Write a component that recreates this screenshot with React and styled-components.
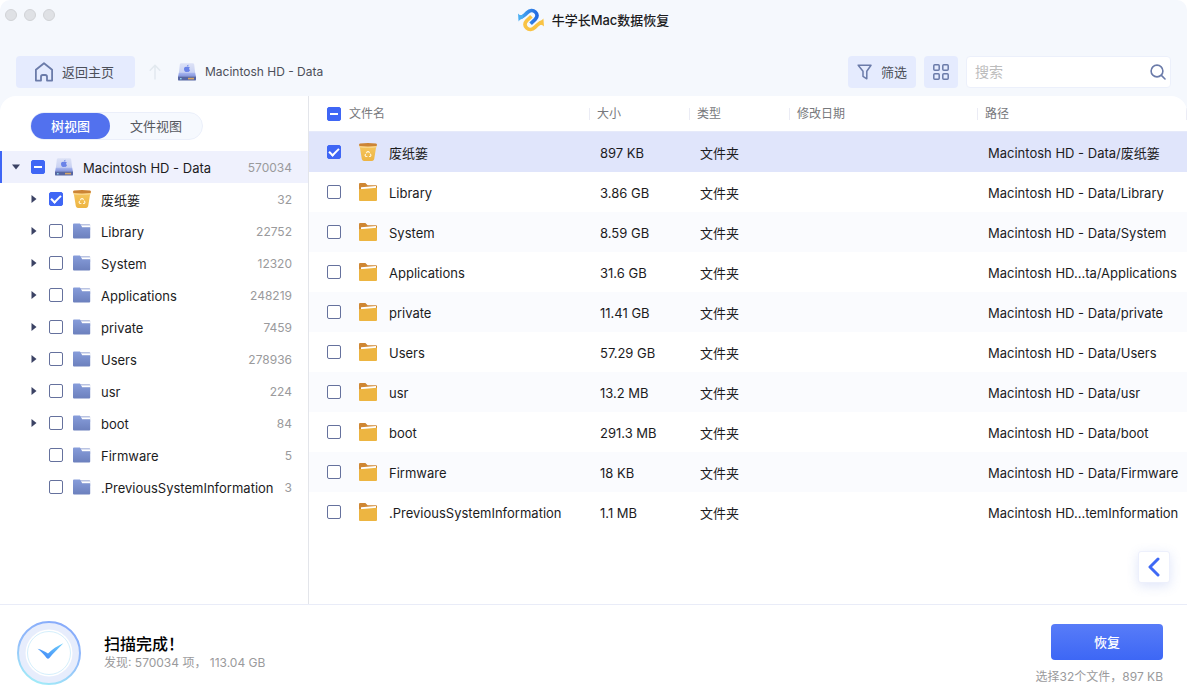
import React, { useState } from "react";
import styled, { createGlobalStyle } from "styled-components";

const TREE = [
  { name: "废纸篓", count: 32, icon: "bin", open: true, checked: true },
  { name: "Library", count: 22752, open: true },
  { name: "System", count: 12320, open: true },
  { name: "Applications", count: 248219, open: true },
  { name: "private", count: 7459, open: true },
  { name: "Users", count: 278936, open: true },
  { name: "usr", count: 224, open: true },
  { name: "boot", count: 84, open: true },
  { name: "Firmware", count: 5 },
  { name: ".PreviousSystemInformation", count: 3 },
];

const FILES = [
  { name: "废纸篓", size: "897 KB", path: "Macintosh HD - Data/废纸篓", icon: "bin" },
  { name: "Library", size: "3.86 GB", path: "Macintosh HD - Data/Library" },
  { name: "System", size: "8.59 GB", path: "Macintosh HD - Data/System" },
  { name: "Applications", size: "31.6 GB", path: "Macintosh HD...ta/Applications" },
  { name: "private", size: "11.41 GB", path: "Macintosh HD - Data/private" },
  { name: "Users", size: "57.29 GB", path: "Macintosh HD - Data/Users" },
  { name: "usr", size: "13.2 MB", path: "Macintosh HD - Data/usr" },
  { name: "boot", size: "291.3 MB", path: "Macintosh HD - Data/boot" },
  { name: "Firmware", size: "18 KB", path: "Macintosh HD - Data/Firmware" },
  { name: ".PreviousSystemInformation", size: "1.1 MB", path: "Macintosh HD...temInformation" },
];

const Logo = () => (
  <svg width="26" height="24" viewBox="0 0 26 24" fill="none">
    <defs>
      <linearGradient id="logoBlue" x1="0" y1="0" x2="20" y2="0" gradientUnits="userSpaceOnUse">
        <stop offset="0" stopColor="#4db2f3" />
        <stop offset="1" stopColor="#2167e0" />
      </linearGradient>
    </defs>
    <path
      d="M1 9.3 C4 9.6 5.4 8.4 7 6.8 L9.2 4.6 C11.8 2 15 1.8 17.3 4 C19.6 6.2 19.6 8.8 17.3 11.2 L12.6 15.8"
      stroke="url(#logoBlue)"
      strokeWidth="3.7"
    />
    <path d="M0 5.4 C1.6 7.4 3.4 7.6 5 6.8 L5 10.6 C3 11.2 1.8 12 0.6 13.4 Z" fill="#4aaef2" />
    <g transform="rotate(180 13 12)">
      <path
        d="M1 9.3 C4 9.6 5.4 8.4 7 6.8 L9.2 4.6 C11.8 2 15 1.8 17.3 4 C19.6 6.2 19.6 8.8 17.3 11.2 L12.6 15.8"
        stroke="#f9c344"
        strokeWidth="3.7"
      />
      <path d="M0 5.4 C1.6 7.4 3.4 7.6 5 6.8 L5 10.6 C3 11.2 1.8 12 0.6 13.4 Z" fill="#f9c344" />
    </g>
  </svg>
);

const HomeIcon = () => (
  <svg width="20" height="20" viewBox="0 0 20 20" fill="none" stroke="#6b7ba9" strokeWidth="1.8" strokeLinejoin="round">
    <path d="M1.9 7.8 L10 1.3 L18.1 7.8 V18.6 H13 V14.8 a1.8 1.8 0 0 0 -1.8 -1.8 H8.8 a1.8 1.8 0 0 0 -1.8 1.8 V18.6 H1.9 Z" />
  </svg>
);

const UpIcon = () => (
  <svg width="12" height="16" viewBox="0 0 12 16" fill="none" stroke="#e2e9ef" strokeWidth="1.5" strokeLinecap="round" strokeLinejoin="round">
    <path d="M6 15 V1.5 M1.2 6.2 L6 1.3 L10.8 6.2" />
  </svg>
);

const DiskIcon = () => (
  <svg width="18" height="18" viewBox="0 0 18 18">
    <defs>
      <linearGradient id="diskTop" x1="0" y1="0" x2="0" y2="1">
        <stop offset="0" stopColor="#dde2f6" />
        <stop offset="1" stopColor="#c6cff2" />
      </linearGradient>
      <linearGradient id="diskMid" x1="0" y1="0" x2="0" y2="1">
        <stop offset="0" stopColor="#a9b7ee" />
        <stop offset="1" stopColor="#7f90dc" />
      </linearGradient>
    </defs>
    <path d="M3.4 0.2 h11.2 a1.6 1.6 0 0 1 1.6 1.4 L17.2 10.6 H0.8 L1.8 1.6 A1.6 1.6 0 0 1 3.4 0.2 Z" fill="url(#diskTop)" />
    <path d="M0.8 9.8 H17.2 L18 13.8 H0 Z" fill="url(#diskMid)" />
    <path d="M0 13.4 h18 v3 a1.2 1.2 0 0 1 -1.2 1.2 H1.2 a1.2 1.2 0 0 1 -1.2 -1.2 Z" fill="#5766a3" />
    <rect x="2" y="15" width="1.6" height="1.4" fill="#8fd3e8" />
    <rect x="10" y="14.8" width="6" height="1.6" fill="#d7a666" />
    <path
      d="M9 3.9 C7.7 3.4 6 3.9 6 5.9 C6 7.7 7.2 9 8 9 C8.5 9 8.6 8.7 9.1 8.7 C9.6 8.7 9.8 9 10.2 9 C11 9 11.8 7.9 12 7.1 C10.8 6.5 10.9 4.9 11.9 4.4 C11.1 3.4 9.9 3.6 9 3.9 Z M9 3.4 C9 2.5 9.7 1.8 10.5 1.7 C10.6 2.6 9.9 3.4 9 3.4 Z"
      fill="#6a83e8"
    />
  </svg>
);

const BinIcon = () => (
  <svg width="18" height="18" viewBox="0 0 18 18">
    <defs>
      <linearGradient id="binBody" x1="0" y1="0" x2="0" y2="1">
        <stop offset="0" stopColor="#f6c75e" />
        <stop offset="1" stopColor="#edb443" />
      </linearGradient>
    </defs>
    <path d="M0.6 2.4 H17.4 L15.2 16 a2.2 2.2 0 0 1 -2 1.9 H4.8 a2.2 2.2 0 0 1 -2 -1.9 Z" fill="url(#binBody)" />
    <path d="M0.3 2.6 Q9 4 17.7 2.6 L17.3 4.6 Q9 5.6 0.7 4.6 Z" fill="#fad586" />
    <path d="M1 0.6 Q9 -0.6 17 0.6 Q18 1 18 2 Q18 2.8 17 3 Q9 3.8 1 3 Q0 2.8 0 2 Q0 1 1 0.6 Z" fill="#cc8435" />
    <g fill="none" stroke="#fff3d6" strokeWidth="1.1" strokeLinejoin="round">
      <path d="M7.2 10.2 L8.4 8.6 H9.7 L10.6 10" />
      <path d="M11.2 10.8 L12 12.2 L11.3 13.5 H10" />
      <path d="M8.4 13.5 H6.8 L6 12.2 L6.7 11" />
    </g>
  </svg>
);

const BlueFolderIcon = () => (
  <svg width="18" height="16" viewBox="0 0 18 16">
    <defs>
      <linearGradient id="folderBlue" x1="0" y1="0" x2="0" y2="1">
        <stop offset="0" stopColor="#879ddb" />
        <stop offset="1" stopColor="#6c80bd" />
      </linearGradient>
    </defs>
    <path d="M7 1 H16.2 a1 1 0 0 1 1 1 V7 H7 Z" fill="#b9c3e2" />
    <path d="M8 2.6 H17.2 V4 H9 Z" fill="#ffffff" />
    <path d="M1 0.4 H7 L9.2 4.6 H17.2 V14.6 a1 1 0 0 1 -1 1 H1 a1 1 0 0 1 -1 -1 V1.4 a1 1 0 0 1 1 -1 Z" fill="url(#folderBlue)" />
  </svg>
);

const YellowFolderIcon = () => (
  <svg width="18" height="18" viewBox="0 0 18 18">
    <path d="M1 0 H6.4 L8.6 2.2 H17 a1 1 0 0 1 1 1 V8 H0 V1 a1 1 0 0 1 1 -1 Z" fill="#cf8733" />
    <path d="M2 4.2 L17 3 V7 H2 Z" fill="#ffffff" />
    <path d="M0 6.2 L6.6 5.8 L18 4.8 V17 a1 1 0 0 1 -1 1 H1 a1 1 0 0 1 -1 -1 Z" fill="#edb541" />
  </svg>
);

const FilterIcon = () => (
  <svg width="16" height="16" viewBox="0 0 16 16" fill="none" stroke="#6b7ba9" strokeWidth="1.5" strokeLinejoin="round">
    <path d="M1.2 1.2 H14 L9.8 7.2 V14.8 L6 12.4 V7.2 Z" />
  </svg>
);

const GridIcon = () => (
  <svg width="16" height="16" viewBox="0 0 16 16" fill="none" stroke="#6b7ba9" strokeWidth="1.5">
    <rect x="0.8" y="0.8" width="5.4" height="5.4" rx="1" />
    <rect x="9.8" y="0.8" width="5.4" height="5.4" rx="1" />
    <rect x="0.8" y="9.8" width="5.4" height="5.4" rx="1" />
    <rect x="9.8" y="9.8" width="5.4" height="5.4" rx="1" />
  </svg>
);

const SearchIcon = () => (
  <svg width="16" height="16" viewBox="0 0 16 16" fill="none" stroke="#6b7ba9" strokeWidth="1.6" strokeLinecap="round">
    <circle cx="7" cy="7" r="5.9" />
    <path d="M11.4 11.4 L15 15" />
  </svg>
);

const DoneIcon = () => (
  <svg width="66" height="66" viewBox="0 0 66 66">
    <defs>
      <linearGradient id="ring" x1="0.7" y1="0" x2="0.3" y2="1">
        <stop offset="0" stopColor="#86aafb" />
        <stop offset="0.5" stopColor="#93bdfa" />
        <stop offset="1" stopColor="#a2ecf8" />
      </linearGradient>
      <linearGradient id="tick" x1="0" y1="1" x2="1" y2="0">
        <stop offset="0" stopColor="#3f83f8" />
        <stop offset="1" stopColor="#6fd0fb" />
      </linearGradient>
    </defs>
    <circle cx="33" cy="33" r="31" fill="#e7edfc" stroke="url(#ring)" strokeWidth="2" />
    <circle cx="33" cy="33" r="23.5" fill="#ffffff" />
    <circle cx="33" cy="33" r="21.5" fill="none" stroke="#d5effc" strokeWidth="1" />
    <path d="M21.6 28.8 C25.4 29.8 28.8 31.4 32 33.6 C36.4 29.2 41 26 47.4 23.2 C42.4 28.4 37.4 33 33.4 38 Q32 39.6 30.6 38 C28 34.6 25.4 31.8 21.6 28.8 Z" fill="url(#tick)" />
  </svg>
);

const ChevronIcon = () => (
  <svg width="12" height="20" viewBox="0 0 12 20" fill="none" stroke="#3f69f5" strokeWidth="3" strokeLinecap="round" strokeLinejoin="round">
    <path d="M10 2 L2 10 L10 18" />
  </svg>
);

const Caret = ({ down }) =>
  down ? (
    <svg width="8" height="6" viewBox="0 0 8 6">
      <path d="M0 0.5 H8 L4 5.5 Z" fill="#3b4264" />
    </svg>
  ) : (
    <svg width="6" height="8" viewBox="0 0 6 8">
      <path d="M0.5 0 V8 L5.5 4 Z" fill="#3b4264" />
    </svg>
  );

const Check = ({ mixed, ...rest }) => (
  <Checkbox
    type="checkbox"
    ref={(el) => {
      if (el) el.indeterminate = !!mixed;
    }}
    {...rest}
  />
);

const App = () => {
  const [picked, setPicked] = useState(["废纸篓"]);
  const toggle = (name) =>
    setPicked((prev) =>
      prev.includes(name) ? prev.filter((n) => n !== name) : [...prev, name]
    );
  return (
    <Page>
      <GlobalStyle />
      <TitleBar>
        <Lights>
          <Light />
          <Light />
          <Light />
        </Lights>
        <Title>
          <Logo />
          牛学长Mac数据恢复
        </Title>
      </TitleBar>
      <Toolbar>
        <ToolButton $wide>
          <HomeIcon />
          返回主页
        </ToolButton>
        <UpButton aria-label="up">
          <UpIcon />
        </UpButton>
        <Crumb>
          <DiskIcon />
          Macintosh HD - Data
        </Crumb>
        <ToolGroup>
          <ToolButton>
            <FilterIcon />
            筛选
          </ToolButton>
          <ToolButton aria-label="grid">
            <GridIcon />
          </ToolButton>
          <SearchBox>
            <input type="text" placeholder="搜索" aria-label="搜索" />
            <SearchIcon />
          </SearchBox>
        </ToolGroup>
      </Toolbar>
      <Main>
        <Sidebar>
          <Tabs>
            <Tab $active>树视图</Tab>
            <Tab>文件视图</Tab>
          </Tabs>
          <TreeRow $root>
            <CaretSlot>
              <Caret down />
            </CaretSlot>
            <Check mixed />
            <IconSlot>
              <DiskIcon />
            </IconSlot>
            <Label>Macintosh HD - Data</Label>
            <Count>570034</Count>
          </TreeRow>
          {TREE.map((item) => (
            <TreeRow key={item.name}>
              <CaretSlot>{item.open && <Caret />}</CaretSlot>
              <Check
                checked={picked.includes(item.name)}
                onChange={() => toggle(item.name)}
              />
              <IconSlot>
                {item.icon === "bin" ? <BinIcon /> : <BlueFolderIcon />}
              </IconSlot>
              <Label>{item.name}</Label>
              <Count>{item.count}</Count>
            </TreeRow>
          ))}
        </Sidebar>
        <Content>
          <FileTable>
            <colgroup>
              <col width="280" />
              <col width="100" />
              <col width="100" />
              <col width="188" />
              <col />
            </colgroup>
            <thead>
              <tr>
                <th>
                  <HeadName>
                    <Check mixed />
                    文件名
                  </HeadName>
                </th>
                <th>
                  <HeadCell>大小</HeadCell>
                </th>
                <th>
                  <HeadCell>类型</HeadCell>
                </th>
                <th>
                  <HeadCell>修改日期</HeadCell>
                </th>
                <th>
                  <HeadCell $last>路径</HeadCell>
                </th>
              </tr>
            </thead>
            <tbody>
              {FILES.map((file) => (
                <FileRow key={file.name} $selected={file.icon === "bin"}>
                  <td>
                    <NameCell>
                      <Check
                        checked={picked.includes(file.name)}
                        onChange={() => toggle(file.name)}
                      />
                      {file.icon === "bin" ? <BinIcon /> : <YellowFolderIcon />}
                      <Label>{file.name}</Label>
                    </NameCell>
                  </td>
                  <td>{file.size}</td>
                  <td>文件夹</td>
                  <td></td>
                  <td>{file.path}</td>
                </FileRow>
              ))}
            </tbody>
          </FileTable>
          <FloatButton aria-label="preview">
            <ChevronIcon />
          </FloatButton>
        </Content>
      </Main>
      <Footer>
        <DoneIcon />
        <Status>
          <h2>扫描完成！</h2>
          <p>发现: 570034 项， 113.04 GB</p>
        </Status>
        <Recover>
          <RecoverButton>恢复</RecoverButton>
          <p>选择32个文件，897 KB</p>
        </Recover>
      </Footer>
    </Page>
  );
};

const GlobalStyle = createGlobalStyle`
  * {
    box-sizing: border-box;
  }
  body {
    margin: 0;
    background: #ffffff;
    font-family: Inter, "Noto Sans CJK SC", sans-serif;
    font-size: 13px;
    line-height: 20px;
    color: #1c1c1e;
  }
  button, input {
    font: inherit;
    color: inherit;
  }
  button {
    padding: 0;
    border: none;
    background: none;
    cursor: pointer;
  }
  h2, p {
    margin: 0;
  }
  svg {
    display: block;
    flex: none;
  }
`;

const Page = styled.div`
  display: flex;
  flex-direction: column;
  min-height: 100vh;
  background: #f5f8fd;
  border-radius: 10px 10px 0 0;
  overflow: hidden;
`;

const TitleBar = styled.header`
  display: grid;
  grid-template-columns: 1fr auto 1fr;
  height: 40px;
`;

const Lights = styled.div`
  display: flex;
  gap: 7px;
  padding: 9px 5px;
`;

const Light = styled.span`
  width: 12px;
  height: 12px;
  border-radius: 50%;
  background: #dfe1e5;
  border: 1px solid #d0d2d6;
`;

const Title = styled.div`
  display: flex;
  align-items: center;
  gap: 8px;
  font-weight: 500;
`;

const Toolbar = styled.div`
  display: flex;
  align-items: center;
  padding: 16px 16px 8px;
`;

const ToolButton = styled.button`
  display: flex;
  align-items: center;
  gap: 8px;
  height: 32px;
  padding: 0 9px;
  border-radius: 4px;
  background: #e5ebfe;
  color: #4c4f59;
  ${(props) => props.$wide && "padding: 0 21px 0 18px;"}
`;

const UpButton = styled.button`
  margin: 0 17px 0 14px;
`;

const Crumb = styled.div`
  display: flex;
  align-items: center;
  gap: 9px;
  font-size: 12px;
  color: #4c4f59;
`;

const ToolGroup = styled.div`
  display: flex;
  gap: 8px;
  margin-left: auto;
`;

const SearchBox = styled.label`
  display: flex;
  align-items: center;
  width: 205px;
  height: 32px;
  padding: 0 4px 0 8px;
  border: 1px solid #ecf0fb;
  border-radius: 4px;
  background: #ffffff;
  input {
    flex: 1;
    min-width: 0;
    padding: 0;
    border: none;
    outline: none;
    background: none;
    font-size: 14px;
  }
  input::placeholder {
    color: #bcbcbc;
  }
`;

const Main = styled.main`
  display: flex;
  flex: 1;
  background: #ffffff;
  border-radius: 16px 16px 0 0;
  overflow: hidden;
`;

const Sidebar = styled.aside`
  width: 309px;
  flex: none;
  border-right: 1px solid #e3e5ea;
`;

const Tabs = styled.div`
  display: flex;
  width: max-content;
  margin: 16px 0 11px 30px;
  border: 1px solid #ebeffa;
  border-radius: 14px;
  background: #f6f9fe;
`;

const Tab = styled.button`
  height: 26px;
  padding: 0 20px;
  border-radius: 13px;
  background: ${(props) => (props.$active ? "#5271ee" : "transparent")};
  color: ${(props) => (props.$active ? "#ffffff" : "#55585f")};
  font-weight: ${(props) => (props.$active ? 500 : 400)};
`;

const TreeRow = styled.div`
  display: flex;
  align-items: center;
  height: 32px;
  padding: 0 16px 0 28px;
  ${(props) =>
    props.$root &&
    `
    padding-left: 8px;
    border-left: 2px solid #3f66f5;
    background: #eff1fd;
  `}
`;

const CaretSlot = styled.span`
  display: flex;
  justify-content: center;
  width: 12px;
  margin-right: 9px;
`;

const IconSlot = styled.span`
  width: 18px;
  margin: 0 10px;
`;

const Label = styled.span`
  padding-top: 2px;
`;

const Count = styled(Label)`
  margin-left: auto;
  font-size: 12px;
  color: #9a9a9c;
`;

const Checkbox = styled.input`
  display: grid;
  place-items: center;
  flex: none;
  appearance: none;
  width: 14px;
  height: 14px;
  margin: 0;
  border: 1px solid #65719d;
  border-radius: 2px;
  background: #ffffff;
  &:checked,
  &:indeterminate {
    border-color: #3f66f5;
    background: #3f66f5;
  }
  &:checked::after {
    content: "";
    width: 4px;
    height: 8px;
    margin-bottom: 3px;
    border: solid #ffffff;
    border-width: 0 2px 2px 0;
    transform: rotate(45deg);
  }
  &:indeterminate::after {
    content: "";
    width: 8px;
    height: 2px;
    background: #ffffff;
  }
`;

const Content = styled.section`
  position: relative;
  flex: 1;
  min-width: 0;
`;

const FileTable = styled.table`
  width: 100%;
  table-layout: fixed;
  border-collapse: separate;
  border-spacing: 0;
  th {
    height: 36px;
    padding: 0;
    border-bottom: 1px solid #e6eafa;
    text-align: left;
    font-size: 12px;
    font-weight: 400;
    color: #77787c;
  }
  td {
    height: 40px;
    padding: 2px 0 0 11px;
    white-space: nowrap;
  }
  td:first-child {
    padding: 0;
  }
`;

const HeadName = styled.label`
  display: flex;
  align-items: center;
  gap: 8px;
  padding-left: 18px;
`;

const HeadCell = styled.div`
  padding-left: 7px;
  border-left: 1px solid #ebecf5;
  line-height: 12px;
  ${(props) => props.$last && "border-right: 1px solid #ebecf5;"}
`;

const FileRow = styled.tr`
  background: #ffffff;
  &:nth-child(odd) {
    background: #fafbfe;
  }
  &&:nth-child(n) {
    ${(props) => props.$selected && "background: #e0e5fb;"}
  }
`;

const NameCell = styled.label`
  display: flex;
  align-items: center;
  padding-left: 18px;
  svg {
    margin: 0 12px 0 18px;
  }
`;

const FloatButton = styled.button`
  position: absolute;
  right: 17px;
  bottom: 21px;
  display: grid;
  place-items: center;
  width: 32px;
  height: 32px;
  border: 1px solid #edf0fc;
  border-radius: 3px;
  background: #ffffff;
  box-shadow: 0 3px 12px rgba(80, 110, 220, 0.18);
`;

const Footer = styled.footer`
  display: flex;
  align-items: center;
  height: 96px;
  padding: 0 24px 0 16px;
  border-top: 1px solid #e9ecf8;
  background: #ffffff;
`;

const Status = styled.div`
  margin-left: 22px;
  h2 {
    font-size: 16px;
    font-weight: 500;
    line-height: 20px;
    color: #000000;
  }
  p {
    font-size: 12px;
    line-height: 18px;
    color: #9a9a9c;
  }
`;

const Recover = styled.div`
  display: flex;
  flex-direction: column;
  align-items: flex-end;
  gap: 8px;
  margin-left: auto;
  padding-top: 4px;
  p {
    font-size: 12px;
    line-height: 18px;
    color: #9a9a9c;
  }
`;

const RecoverButton = styled.button`
  width: 112px;
  height: 36px;
  border-radius: 4px;
  background: linear-gradient(#587cf8, #3d67f5);
  color: #ffffff;
  font-weight: 500;
`;

export default App;
